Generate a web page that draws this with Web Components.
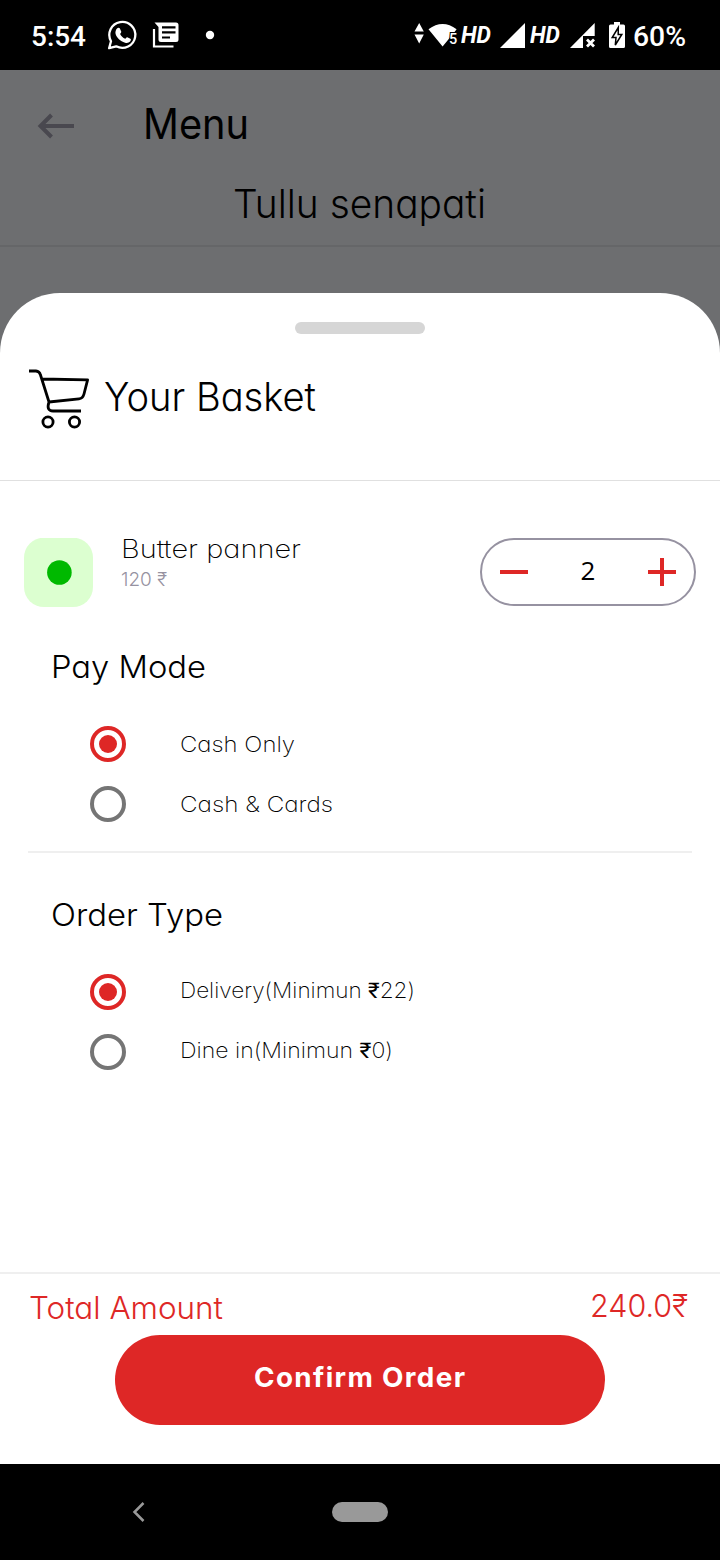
<!DOCTYPE html>
<html lang="en">
<head>
<meta charset="utf-8">
<title>Your Basket</title>
<style>
html,body{margin:0;padding:0;background:#000}
</style>
</head>
<body>
<order-screen></order-screen>
<script>
const define = (name, html, setup) => customElements.define(name, class extends HTMLElement {
  connectedCallback() {
    if (this.shadowRoot) return;
    const root = this.attachShadow({ mode: 'open' });
    const t = document.createElement('template');
    t.innerHTML = html;
    root.append(t.content.cloneNode(true));
    if (setup) setup(this, root);
  }
});

/* A single line of text that fills the width in "w": the glyphs are widened
   or narrowed within limits, and tracking takes up what is left. */
define('fit-text', `<style>
:host{display:block;white-space:nowrap;flex:none}
span{display:inline-block;transform-origin:0 50%}
</style><span><slot></slot></span>`, (el, root) => {
  const w = +el.getAttribute('w');
  const span = root.querySelector('span');
  el.style.fontSize = el.getAttribute('size') + 'px';
  el.style.width = w + 'px';
  el.style.letterSpacing = '0px';
  const natural = span.getBoundingClientRect().width;
  const n = el.textContent.length;
  const scale = Math.min(+(el.getAttribute('max') || 1.14), Math.max(0.82, w / natural));
  span.style.transform = `scaleX(${scale.toFixed(4)})`;
  el.style.letterSpacing = ((w / scale - natural) / (n - 1)).toFixed(3) + 'px';
});

define('status-bar', `<style>
:host{display:flex;height:70px;background:#000;color:#fff;font-family:Roboto,sans-serif;font-weight:500;box-sizing:border-box;padding:0 35px 0 31px;justify-content:space-between}
div{display:flex;height:70px;align-items:center}
fit-text{line-height:66px;padding-top:4px}
svg{display:block;flex:none}
fit-text.hd{font-weight:700;font-style:italic;padding:0}
</style>
<div>
<fit-text size="27.5" w="55">5:54</fit-text>
<svg style="margin-left:20px" width="32" height="70" fill="none" stroke="#fff"><path d="M3.1 48.2 5 41.2A13 13 0 1 1 10.2 46.3Z" stroke-width="2.3" stroke-linejoin="round"/><path d="M11 28.5c1-1.2 2.4-1 2.9-.1l1.4 3.4c.1.7-.9 1.6-1.2 2.2 1 2.2 2.8 3.8 5.1 4.8.8-.6 1.3-1.8 2.1-1.6l3.1 1.5c.9.4.4 2-.3 2.9-1.4 1.4-3.2 1.7-5 1.1-4.9-1.4-8.3-4.7-9.5-8.6-.5-2 .2-4.4 1.4-5.6Z" fill="#fff" stroke="none"/></svg>
<svg style="margin-left:14px" width="30" height="70" fill="none"><path d="M2.500 22.500H24Q26.500 22.500 26.500 25V39.500Q26.500 42 24 42H9Q6.500 42 6.500 39.500V27Z" fill="#fff"/><path d="M2 29V46.500H21.500" stroke="#fff" stroke-width="2.200"/><path d="M10 27.300H23.500M10 32.400H23.500M10 37.500H18" stroke="#000" stroke-width="2.200"/></svg>
<svg style="margin-left:23px" width="10" height="70"><circle cx="5" cy="35" r="4.200" fill="#fff"/></svg>
</div>
<div>
<svg width="46" height="70" fill="#fff"><path d="M.500 31.600 5.200 23 9.800 31.600ZM.500 34.600H9.800L5.200 43.500Z"/><path d="M14.500 29.300Q28.600 18.500 42.600 29.300L40.500 32H36V37.500L28.600 46.500Z"/><text x="35" y="44" font-size="14.500" font-weight="500" stroke="#000" stroke-width="2" paint-order="stroke">5</text></svg>
<fit-text class="hd" size="23.500" w="30" style="margin-left:1px">HD</fit-text>
<svg style="margin-left:9px" width="25" height="70" fill="#fff"><path d="M0 48 25 23V48Z"/></svg>
<fit-text class="hd" size="23.500" w="30" style="margin-left:5px">HD</fit-text>
<svg style="margin-left:10px" width="26" height="70" fill="#fff"><path d="M0 48 24.700 23V36H13V48Z"/><path d="m17 39.500 7 7m0-7-7 7" stroke="#fff" stroke-width="2.800"/></svg>
<svg style="margin-left:13px" width="17" height="70"><path d="M1.500 24.500H5V22H11V24.500H14.500Q16 24.500 16 26V46.500Q16 48 14.500 48H1.500Q0 48 0 46.500V26Q0 24.500 1.500 24.500Z" fill="#fff"/><path d="M9.300 27.500 3.200 37.500H7L6.300 45 12.800 34.500H9.200Z" fill="#fff" stroke="#000" stroke-width="1.500"/></svg>
<fit-text size="27.500" w="53" style="margin-left:7px;margin-right:-1px">60%</fit-text>
</div>`);

define('app-header', `<style>
:host{display:block;height:175px;background:#6d6e70;border-bottom:2px solid #656668;color:#000}
header{display:flex;height:107px;align-items:center}
svg{display:block;margin:4px 69px 0 36px}
fit-text{line-height:60px}
.menu{font-weight:400}
.name{margin:0 auto;position:relative;left:-1px}
.row{display:flex;height:53px;align-items:center}
</style>
<header><svg width="38" height="26" fill="none" stroke="#49484f" stroke-width="4"><path d="M38 13H5M15.500 2 4.500 13 15.500 24"/></svg>
<fit-text class="menu" size="41.700" w="106">Menu</fit-text></header>
<div class="row"><fit-text class="name" size="39.500" w="253">Tullu senapati</fit-text></div>`);

define('basket-title', `<style>
:host{display:flex;height:187px;border-bottom:1px solid #e0e0e0;flex-direction:column}
i{display:block;width:130px;height:12px;border-radius:6px;background:#d6d6d6;margin:29px auto 0}
div{display:flex;height:125px;align-items:center;padding-left:28px}
svg{display:block;margin:4px 14px 0 0}
fit-text{line-height:50px;padding-top:1px}
</style><i></i><div>
<svg width="62" height="60" fill="none" stroke="#000" stroke-width="2.800" stroke-linejoin="round"><path d="M1 2H8Q11.500 2.200 12.500 6L21 33M14 10 59.600 10.800 56 25Q54.800 29.500 51 29.800L21 33Q18 42 25 42H53"/><circle cx="20" cy="53" r="5.100"/><circle cx="46.500" cy="53" r="5.100"/></svg>
<fit-text size="39" w="212">Your Basket</fit-text></div>`);

define('quantity-stepper', `<style>
:host{display:flex;box-sizing:border-box;width:216px;height:68px;border:2px solid #9692a1;border-radius:34px;align-items:center;justify-content:space-between;padding:0 18px}
svg{display:block}
span{font:400 26px/58px "Open Sans",sans-serif;padding-bottom:4px}
</style>
<svg width="28" height="28"><path d="M0 14H28" stroke="#de2726" stroke-width="4"/></svg><span><slot></slot></span>
<svg width="28" height="28"><path d="M0 14H28M14 0V28" stroke="#de2726" stroke-width="4"/></svg>`);

define('basket-item', `<style>
:host{display:flex;padding:57px 24px 0;height:70px}
svg{display:block;margin-right:28px}
.info{flex:1}
.title{font-weight:250;line-height:22px}
.price{line-height:20px;margin-top:9px;color:#9692a1}
</style><svg width="69" height="70"><rect y="-.300" width="69" height="69.300" rx="20" fill="#dcffd0"/><circle cx="35.400" cy="34.500" r="12.300" fill="#00b900"/></svg>
<div class="info"><fit-text class="title" size="25.700" w="180">Butter panner</fit-text><fit-text class="price" size="19.300" w="46">120 ₹</fit-text></div>
<quantity-stepper>2</quantity-stepper>`);

define('radio-option', `<style>
:host{display:flex;height:60px;align-items:center;padding-left:90px}
i{box-sizing:border-box;width:36px;height:36px;border:4px solid #757575;border-radius:50%;margin-right:54px;display:grid;place-items:center}
:host([checked]) i{border-color:#de2726}
:host([checked]) i::after{content:"";width:18px;height:18px;border-radius:50%;background:#de2726}
div{font-weight:250;line-height:30px;margin-top:var(--lift,0px);color:#000}
</style><i></i><div><slot></slot></div>`);

define('section-title', `<style>
:host{display:block;padding-left:51px;height:67px;line-height:40px}
</style><slot></slot>`);

define('checkout-footer', `<style>
:host{display:block;height:190px;border-top:2px solid #efefef;color:#de2726}
.sum{display:flex;justify-content:space-between;padding:14px 32px 0 29px;height:47px;box-sizing:border-box}
fit-text{line-height:40px}
.amount{margin-top:-2px}
button{display:flex;justify-content:center;align-items:center;box-sizing:border-box;width:490px;height:90px;border:0;border-radius:45px;background:#de2726;color:#fff;margin:14px auto 0;padding:0 6px 5px 0;font:inherit;font-weight:700}
</style><div class="sum"><fit-text size="31" w="194">Total Amount</fit-text><fit-text class="amount" size="31.600" w="98">240.0₹</fit-text></div>
<button><fit-text size="27" w="211" max="1.03">Confirm Order</fit-text></button>`);

define('nav-bar', `<style>
:host{display:flex;height:96px;background:#000;align-items:center}
svg{display:block;margin:0 187px 0 132px}
i{width:56px;height:20px;border-radius:10px;background:#999}
</style><svg width="13" height="22" fill="none" stroke="#999" stroke-width="2.500"><path d="M11.500 2 2.500 11 11.500 20"/></svg><i></i>`);

define('order-screen', `<style>
:host{display:block;width:720px;height:1560px;overflow:hidden;color:#000;font-family:Inter,sans-serif;font-weight:300;font-feature-settings:"cv11" 1,"calt" 0}
.back{background:#6d6e70}
.sheet{display:flex;flex-direction:column;background:#fff;height:1171px;margin-top:46px;border-radius:60px 60px 0 0}
.pay{margin-top:39px}
.line{height:2px;background:#efefef;margin:17px 28px 0}
.type{margin-top:42px;--lift:-4px}
checkout-footer{margin-top:auto}
b{font-family:Roboto,sans-serif;font-weight:400}
</style>
<status-bar></status-bar>
<div class="back"><app-header></app-header>
<main class="sheet">
<basket-title></basket-title>
<basket-item></basket-item>
<section class="pay"><section-title><fit-text size="31.200" w="155">Pay Mode</fit-text></section-title>
<radio-option checked><fit-text size="21.600" w="115">Cash Only</fit-text></radio-option>
<radio-option><fit-text size="21.600" w="153">Cash &amp; Cards</fit-text></radio-option></section>
<div class="line"></div>
<section class="type"><section-title><fit-text size="31.200" w="172">Order Type</fit-text></section-title>
<radio-option checked><fit-text size="21.600" w="235">Delivery(Minimun <b>₹</b>22)</fit-text></radio-option>
<radio-option><fit-text size="21.600" w="213">Dine in(Minimun <b>₹</b>0)</fit-text></radio-option></section>
<checkout-footer></checkout-footer>
</main></div>
<nav-bar></nav-bar>`);
</script>
</body>
</html>
